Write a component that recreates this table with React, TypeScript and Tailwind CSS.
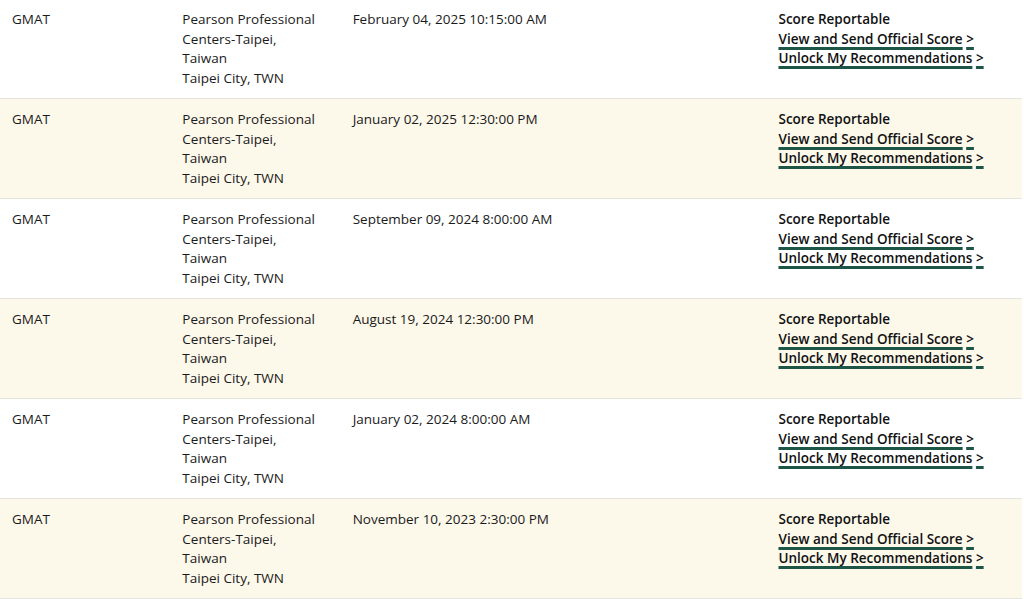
import React from "react";

const exams = [
  { date: "February 04, 2025 10:15:00 AM" },
  { date: "January 02, 2025 12:30:00 PM" },
  { date: "September 09, 2024 8:00:00 AM" },
  { date: "August 19, 2024 12:30:00 PM" },
  { date: "January 02, 2024 8:00:00 AM" },
  { date: "November 10, 2023 2:30:00 PM" },
];

function ScoreLink({ label }: { label: string }) {
  return (
    <a href="#" className="block w-fit font-semibold text-[#111]">
      <span className="underline decoration-[#1d5646] decoration-[3px] underline-offset-[3px]">{label}</span>{" "}
      <span className="underline decoration-[#1d5646] decoration-[3px] underline-offset-[3px]">&gt;</span>
    </a>
  );
}

export default function App() {
  return (
    <div className="min-h-screen bg-white font-['Open_Sans',sans-serif] text-[13.5px] leading-[19.5px] text-[#1a1a1a]">
      <div className="w-[1022px] -mt-px">
        {exams.map((exam, i) => (
          <div
            key={exam.date}
            className={`grid grid-cols-12 border-b border-[#e6e4de] pt-[11px] pb-[10px] ${i % 2 === 1 ? "bg-[#fcf8ea]" : "bg-white"}`}
          >
            <div className="col-span-2 pl-3">GMAT</div>
            <div className="col-span-2 pl-3 pr-[22px]">
              <p>Pearson Professional Centers-Taipei, Taiwan</p>
              <p>Taipei City, TWN</p>
            </div>
            <div className="col-span-5 pl-3">{exam.date}</div>
            <div className="col-span-3 pl-3">
              <p className="font-semibold text-[#111]">Score Reportable</p>
              <ScoreLink label="View and Send Official Score" />
              <ScoreLink label="Unlock My Recommendations" />
            </div>
          </div>
        ))}
      </div>
    </div>
  );
}
